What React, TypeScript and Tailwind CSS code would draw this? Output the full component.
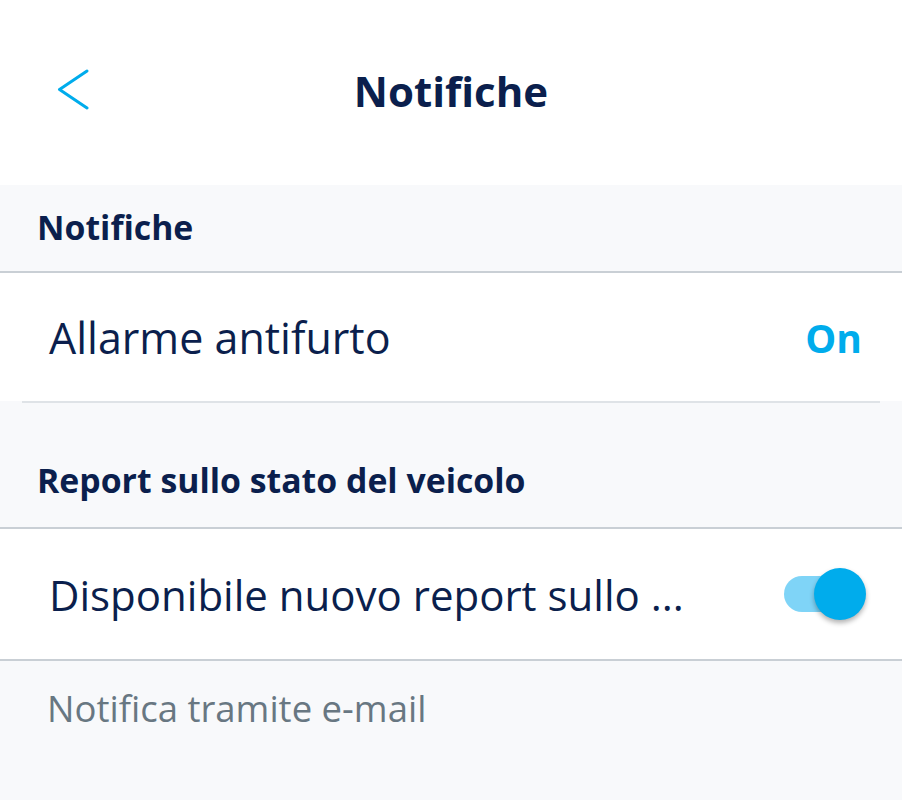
export default function App() {
  return (
    <div className="min-h-screen w-full bg-[#f8f9fb] font-['Open_Sans',sans-serif] text-[#0b1f4d]">
      <header className="flex h-[185px] items-center bg-white px-[56px] pb-[4px]">
        <button className="flex h-[44px] w-[36px] items-center text-[#00acec]">
          <svg width="36" height="44" viewBox="0 0 36 44" fill="none">
            <path d="M31 2 L3.5 20.5 L31 39" stroke="currentColor" strokeWidth="3" strokeLinecap="round" strokeLinejoin="round" />
          </svg>
        </button>
        <h1 className="-ml-[36px] flex-1 text-center text-[42px] font-bold">Notifiche</h1>
      </header>

      <SectionHeader title="Notifiche" />
      <div className="bg-white">
        <div className="flex h-[128px] items-center justify-between pl-[49px] pr-[40px] pt-[3px]">
          <span className="text-[43px]">Allarme antifurto</span>
          <span className="text-[39px] font-bold text-[#00acec]">On</span>
        </div>
      </div>
      <div className="mx-[22px] h-[2px] bg-[#dfe3e7]" />

      <div className="h-[35px]" />
      <SectionHeader title="Report sullo stato del veicolo" compact />
      <div className="flex h-[130px] items-center justify-between bg-white pl-[49px] pr-[36px]">
        <span className="text-[42px]">Disponibile nuovo report sullo ...</span>
        <div className="relative h-[36px] w-[82px]">
          <div className="absolute left-0 top-0 h-[36px] w-[60px] rounded-full bg-[#7fd4f7]" />
          <div className="absolute right-0 top-[-8px] h-[52px] w-[52px] rounded-full bg-[#00acec] shadow-[0_3px_5px_rgba(0,0,0,0.3)]" />
        </div>
      </div>
      <div className="h-[2px] bg-[#c9cfd5]" />
      <div className="pl-[47px] pt-[20px] text-[36.5px] text-[#687782]">Notifica tramite e-mail</div>
    </div>
  );
}

function SectionHeader({ title, compact }: { title: string; compact?: boolean }) {
  return (
    <div className="bg-[#f8f9fb]">
      <div className={`flex items-center pl-[37px] ${compact ? "h-[89px] pb-[4px]" : "h-[86px] pb-[2px]"}`}>
        <h2 className="text-[33.8px] font-bold">{title}</h2>
      </div>
      <div className="h-[2px] bg-[#c9cfd5]" />
    </div>
  );
}
